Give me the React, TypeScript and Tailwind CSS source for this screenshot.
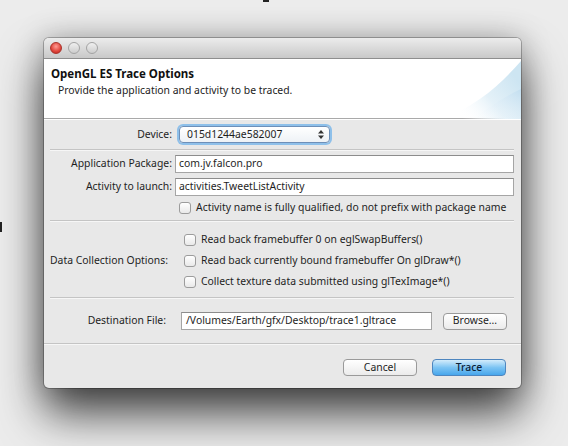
import React from "react";

const Checkbox = () => (
  <div className="w-[12px] h-[12px] rounded-[3px] border border-[#9c9c9c] bg-gradient-to-b from-white to-[#e9e9e9] shrink-0" />
);

const Sep = () => (
  <div className="mx-[6px] mr-[7px] border-t border-[#c4c4c4] border-b border-b-[#f6f6f6]" />
);

export default function App() {
  return (
    <div className="w-[568px] h-[446px] bg-[#ececec] relative overflow-hidden font-['Noto_Sans',sans-serif] text-[10.4px] text-[#1e1e1e]">
      <div className="absolute left-[263px] top-0 w-[6px] h-[2px] bg-[#222]" />
      <div className="absolute left-0 top-[222px] w-[2px] h-[10px] bg-[#222]" />
      <div className="pt-[38px] pl-[44px]">
        <div className="w-[477px] rounded-[5px] bg-[#e8e8e8] overflow-hidden shadow-[0_26px_45px_rgba(0,0,0,0.7),0_0_30px_rgba(0,0,0,0.25),0_0_0_1px_rgba(0,0,0,0.25)]">
          {/* title bar */}
          <div className="h-[21px] bg-gradient-to-b from-[#ececec] to-[#c9c9c9] border-b border-[#8e8e8e] flex items-center pl-[6px] gap-[6px]">
            <div className="w-[12px] h-[12px] rounded-full bg-[radial-gradient(circle_at_50%_35%,#ff9c94,#e0443a_60%,#b3261f)] border border-[#a8322a]" />
            <div className="w-[12px] h-[12px] rounded-full bg-gradient-to-b from-[#f0f0f0] to-[#cdcdcd] border border-[#a3a3a3]" />
            <div className="w-[12px] h-[12px] rounded-full bg-gradient-to-b from-[#f0f0f0] to-[#cdcdcd] border border-[#a3a3a3]" />
          </div>
          {/* header */}
          <div className="h-[60px] bg-white relative border-b border-[#a9a9a9]">
            <svg className="absolute right-0 top-0" width="80" height="60" viewBox="0 0 80 60">
              <defs>
                <linearGradient id="g1" x1="0" y1="1" x2="1" y2="0.4">
                  <stop offset="0.2" stopColor="#ffffff" stopOpacity="0" />
                  <stop offset="0.6" stopColor="#e4f1f8" />
                  <stop offset="1" stopColor="#cde5f2" />
                </linearGradient>
                <linearGradient id="g2" x1="0" y1="1" x2="1" y2="0">
                  <stop offset="0" stopColor="#ffffff" stopOpacity="0" />
                  <stop offset="1" stopColor="#c2def0" />
                </linearGradient>
              </defs>
              <path d="M0 60 C 35 48, 60 25, 80 2 L80 60 Z" fill="url(#g1)" />
              <path d="M30 60 C 48 50, 62 38, 80 30 L80 60 Z" fill="url(#g2)" />
            </svg>
            <div className="relative pl-[7px] pt-[6px] text-[11.5px] font-bold text-[#111]">OpenGL ES Trace Options</div>
            <div className="relative pl-[14px] pt-[1px] text-[#222]">Provide the application and activity to be traced.</div>
          </div>
          <div className="border-t border-white" />
          {/* body */}
          <div className="pt-[6px]">
            {/* device */}
            <div className="flex items-center h-[17px]">
              <div className="w-[128px] text-right">Device:</div>
              <div className="ml-[7px] w-[151px] h-[17px] rounded-[4px] border border-[#6d8fb8] bg-gradient-to-b from-white to-[#eef2f6] shadow-[0_0_0_2px_#8ec0ea] flex items-center pl-[7px] pr-[5px] justify-between">
                <span>015d1244ae582007</span>
                <svg width="6" height="9" viewBox="0 0 6 9">
                  <path d="M3 0 L6 3.5 H0 Z" fill="#333" />
                  <path d="M3 9 L6 5.5 H0 Z" fill="#333" />
                </svg>
              </div>
            </div>
            <div className="h-[6px]" />
            <Sep />
            {/* package/activity */}
            <div className="pt-[4px] flex flex-col gap-[5px]">
              <div className="flex items-center h-[18px]">
                <div className="w-[128px] text-right">Application Package:</div>
                <div className="ml-[3px] w-[339px] h-[18px] bg-white border border-[#a5a5a5] border-t-[#8c8c8c] flex items-center pl-[3px]">com.jv.falcon.pro</div>
              </div>
              <div className="flex items-center h-[18px]">
                <div className="w-[128px] text-right">Activity to launch:</div>
                <div className="ml-[3px] w-[339px] h-[18px] bg-white border border-[#a5a5a5] border-t-[#8c8c8c] flex items-center pl-[3px]">activities.TweetListActivity</div>
              </div>
              <div className="flex items-center h-[14px] pl-[135px] gap-[5px]">
                <Checkbox />
                <span>Activity name is fully qualified, do not prefix with package name</span>
              </div>
            </div>
            <div className="h-[5px]" />
            <Sep />
            {/* data collection */}
            <div className="flex items-center pt-[11px] pb-[9px]">
              <div className="w-[124px] text-right">Data Collection Options:</div>
              <div className="ml-[16px] flex flex-col gap-[8px]">
                <div className="flex items-center gap-[5px] h-[13px]"><Checkbox /><span>Read back framebuffer 0 on eglSwapBuffers()</span></div>
                <div className="flex items-center gap-[5px] h-[13px]"><Checkbox /><span>Read back currently bound framebuffer On glDraw*()</span></div>
                <div className="flex items-center gap-[5px] h-[13px]"><Checkbox /><span>Collect texture data submitted using glTexImage*()</span></div>
              </div>
            </div>
            <Sep />
            {/* destination */}
            <div className="flex items-center pt-[13px] pb-[13px]">
              <div className="w-[122px] text-right">Destination File:</div>
              <div className="ml-[15px] w-[251px] h-[18px] bg-white border border-[#a5a5a5] border-t-[#8c8c8c] flex items-center pl-[4px]">/Volumes/Earth/gfx/Desktop/trace1.gltrace</div>
              <div className="ml-[11px] w-[64px] h-[17px] rounded-[4px] border border-[#9a9a9a] bg-gradient-to-b from-white to-[#ebebeb] flex items-center justify-center">Browse...</div>
            </div>
            <div className="border-t border-[#c4c4c4] border-b border-b-[#f6f6f6]" />
            {/* buttons */}
            <div className="flex justify-end gap-[15px] pr-[15px] pt-[14px] pb-[12px]">
              <div className="w-[74px] h-[17px] rounded-[4px] border border-[#9a9a9a] bg-gradient-to-b from-white to-[#ebebeb] flex items-center justify-center">Cancel</div>
              <div className="w-[74px] h-[17px] rounded-[4px] border border-[#4e86bf] bg-gradient-to-b from-[#d3ecfb] via-[#7cc4f3] to-[#46a6ec] flex items-center justify-center text-[#0d2238] font-medium">Trace</div>
            </div>
          </div>
        </div>
      </div>
    </div>
  );
}
